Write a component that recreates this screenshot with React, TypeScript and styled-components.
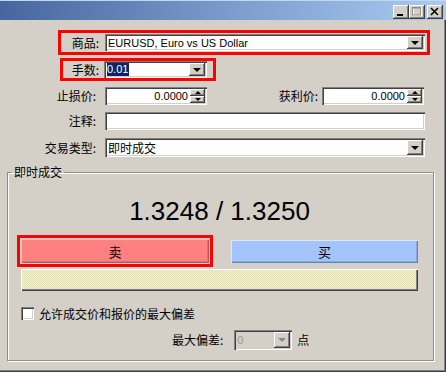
import * as React from 'react';
import styled, { createGlobalStyle } from 'styled-components';

const GlobalStyle = createGlobalStyle`
  html, body {
    margin: 0;
    padding: 0;
    background: #d4d0c8;
  }
  body {
    font-family: "Liberation Sans", "Noto Sans CJK SC", sans-serif;
  }
`;

const raised = `
  box-shadow: inset -1px -1px #404040, inset 1px 1px #fff, inset -2px -2px #808080;
`;

const sunken = `
  box-shadow: inset 1px 1px #808080, inset 2px 2px #404040, inset -1px -1px #fff, inset -2px -2px #d4d0c8;
`;

const Window = styled.div`
  width: 446px;
  height: 372px;
  background: #d4d0c8;
  display: flex;
  flex-direction: column;
  overflow: hidden;
  box-shadow: inset -1px -1px #404040, inset -2px -2px #808080;
`;

const TitleBar = styled.div`
  height: 20px;
  flex: none;
  display: flex;
  justify-content: flex-end;
  align-items: center;
  padding-right: 3px;
  padding-top: 2px;
  box-sizing: border-box;
  background: linear-gradient(to right, #46669f, #7a9acb 50%, #a8cbf1);
  border-top: 1px solid #c4d6ee;
`;

const CaptionButton = styled.div<{ $gap?: number }>`
  width: 16px;
  height: 14px;
  margin-left: ${p => p.$gap || 0}px;
  background: #d4d0c8;
  display: flex;
  align-items: center;
  justify-content: center;
  ${raised}
`;

const Form = styled.div`
  padding-right: 21px;
  display: flex;
  flex-direction: column;
`;

const Highlight = styled.div<{ $ml: number; $w: number; $mt: number; $pad: string }>`
  box-sizing: border-box;
  margin-left: ${p => p.$ml}px;
  margin-top: ${p => p.$mt}px;
  width: ${p => p.$w}px;
  border: 3px solid #ff0000;
  padding: ${p => p.$pad};
  display: flex;
  align-items: center;
  flex: none;
`;

const Row = styled.div<{ $mt: number }>`
  display: flex;
  align-items: center;
  margin-top: ${p => p.$mt}px;
`;

const Label = styled.div<{ $w?: number; $pr: number }>`
  ${p => (p.$w ? `width: ${p.$w}px; flex: none;` : 'flex: 1;')}
  box-sizing: border-box;
  padding-right: ${p => p.$pr}px;
  text-align: right;
  font-family: "Noto Sans CJK SC", sans-serif;
  font-size: 12px;
  line-height: 16px;
  color: #000;
  white-space: nowrap;
`;

const Field = styled.div<{ $w?: number; $h: number; $disabled?: boolean }>`
  ${p => (p.$w ? `width: ${p.$w}px; flex: none;` : 'flex: 1;')}
  height: ${p => p.$h}px;
  box-sizing: border-box;
  padding: 2px;
  display: flex;
  align-items: stretch;
  background: ${p => (p.$disabled ? '#d4d0c8' : '#fff')};
  ${sunken}
`;

const FieldText = styled.div<{ $right?: boolean; $cjk?: boolean; $muted?: boolean }>`
  flex: 1;
  display: flex;
  align-items: center;
  justify-content: ${p => (p.$right ? 'flex-end' : 'flex-start')};
  padding: 0 2px 0 1px;
  font-family: ${p => (p.$cjk ? '"Noto Sans CJK SC", sans-serif' : '"Liberation Sans", sans-serif')};
  font-size: ${p => (p.$cjk ? 12 : 11)}px;
  color: ${p => (p.$muted ? '#9a9892' : '#000')};
  white-space: nowrap;
  overflow: hidden;
`;

const Selected = styled.span`
  background: #0a246a;
  color: #fff;
  padding-right: 1px;
  line-height: 13px;
`;

const DropButton = styled.div`
  width: 16px;
  flex: none;
  background: #d4d0c8;
  display: flex;
  align-items: center;
  justify-content: center;
  ${raised}
`;

const Arrow = styled.div<{ $up?: boolean; $size: number; $color?: string }>`
  width: 0;
  height: 0;
  border-left: ${p => p.$size}px solid transparent;
  border-right: ${p => p.$size}px solid transparent;
  ${p => (p.$up ? 'border-bottom' : 'border-top')}: ${p => p.$size}px solid ${p => p.$color || '#000'};
`;

const SpinColumn = styled.div`
  width: 15px;
  flex: none;
  display: flex;
  flex-direction: column;
`;

const SpinHalf = styled.div`
  flex: 1;
  background: #d4d0c8;
  display: flex;
  align-items: center;
  justify-content: center;
  ${raised}
`;

const GroupBox = styled.fieldset`
  margin: 8px 12px 0 7px;
  padding: 0 15px 10px 13px;
  min-width: 0;
  border: 1px solid #8e8c86;
  box-shadow: 1px 1px 0 #fff, inset 1px 1px 0 #fff;
  display: flex;
  flex-direction: column;
`;

const Legend = styled.legend`
  margin-left: -9px;
  padding: 0 2px;
  font-family: "Noto Sans CJK SC", sans-serif;
  font-size: 12px;
  line-height: 14px;
  color: #000;
`;

const Price = styled.div`
  margin-top: 17px;
  text-align: center;
  font-family: "Liberation Sans", sans-serif;
  font-size: 26px;
  line-height: 30px;
  color: #000;
`;

const TradeRow = styled.div`
  margin-top: 9px;
  display: flex;
  justify-content: space-between;
  align-items: center;
`;

const TradeButton = styled.div<{ $tone: 'sell' | 'buy'; $w: number; $h: number }>`
  width: ${p => p.$w}px;
  height: ${p => p.$h}px;
  display: flex;
  align-items: center;
  justify-content: center;
  font-family: "Noto Sans CJK SC", sans-serif;
  font-size: 13px;
  color: #000;
  background: ${p => (p.$tone === 'sell' ? '#ff8080' : '#a2c3fb')};
  box-shadow: ${p =>
    p.$tone === 'sell'
      ? 'inset 1px 1px #ffb6b6, inset -1px -1px #b85858, inset -2px -2px #e07070'
      : 'inset 1px 1px #d8e8ff, inset -1px -1px #6284c4, inset -2px -2px #8aa8e0'};
`;

const QuoteBar = styled.div`
  margin-top: 2px;
  height: 22px;
  background: repeating-conic-gradient(#fcf8c4 0 25%, #dcd8bc 0 50%) 0 0 / 2px 2px;
  box-shadow: inset 1px 1px #fff, inset -1px -1px #404040, inset -2px -2px #808080;
`;

const CheckRow = styled.div`
  margin-top: 16px;
  height: 13px;
  display: flex;
  align-items: center;
  gap: 5px;
`;

const CheckBox = styled.div`
  width: 13px;
  height: 13px;
  flex: none;
  background: #fff;
  ${sunken}
`;

const Text = styled.span`
  font-family: "Noto Sans CJK SC", sans-serif;
  font-size: 12px;
  line-height: 16px;
  color: #000;
  white-space: nowrap;
`;

const DeviationRow = styled.div`
  margin-top: 10px;
  height: 20px;
  padding-left: 151px;
  display: flex;
  align-items: center;
  gap: 11px;
`;

const Unit = styled(Text)`
  margin-left: -6px;
`;

function Combo(props: { w?: number; h: number; children: React.ReactNode; cjk?: boolean; disabled?: boolean }) {
  return (
    <Field $w={props.w} $h={props.h} $disabled={props.disabled}>
      <FieldText $cjk={props.cjk} $muted={props.disabled}>{props.children}</FieldText>
      <DropButton>
        <Arrow $size={4} $color={props.disabled ? '#8a8882' : '#000'} />
      </DropButton>
    </Field>
  );
}

function Spin(props: { value: string }) {
  return (
    <Field $w={102} $h={18}>
      <FieldText $right>{props.value}</FieldText>
      <SpinColumn>
        <SpinHalf><Arrow $up $size={3} /></SpinHalf>
        <SpinHalf><Arrow $size={3} /></SpinHalf>
      </SpinColumn>
    </Field>
  );
}

export default function App() {
  return (
    <Window>
      <GlobalStyle />
      <TitleBar>
        <CaptionButton>
          <svg width="10" height="10" viewBox="0 0 10 10">
            <rect x="1" y="7" width="6" height="2" fill="#000" />
          </svg>
        </CaptionButton>
        <CaptionButton>
          <svg width="10" height="10" viewBox="0 0 10 10">
            <rect x="1.5" y="0.5" width="8" height="8" fill="none" stroke="#fff" />
            <rect x="0.5" y="0" width="8" height="8" fill="none" stroke="#8e8c86" />
            <rect x="0.5" y="0" width="8" height="1.5" fill="#8e8c86" />
          </svg>
        </CaptionButton>
        <CaptionButton $gap={2}>
          <svg width="10" height="9" viewBox="0 0 10 9">
            <path d="M1 1 L8 8 M8 1 L1 8" stroke="#000" strokeWidth="1.6" />
          </svg>
        </CaptionButton>
      </TitleBar>

      <Form>
        <Highlight $ml={58} $w={372} $mt={10} $pad="1px 2px 1px 0">
          <Label $w={44} $pr={6}>商品:</Label>
          <Combo h={17}>EURUSD, Euro vs US Dollar</Combo>
        </Highlight>

        <Highlight $ml={60} $w={156} $mt={3} $pad="0 6px 0 0">
          <Label $w={41} $pr={5}>手数:</Label>
          <Combo w={103} h={17}><Selected>0.01</Selected></Combo>
        </Highlight>

        <Row $mt={6}>
          <Label $w={105} $pr={9}>止损价:</Label>
          <Spin value="0.0000" />
          <Label $pr={4}>获利价:</Label>
          <Spin value="0.0000" />
          <div style={{ width: 1 }} />
        </Row>

        <Row $mt={7}>
          <Label $w={105} $pr={9}>注释:</Label>
          <Field $h={18}>
            <FieldText />
          </Field>
        </Row>

        <Row $mt={8}>
          <Label $w={105} $pr={9}>交易类型:</Label>
          <Combo h={19} cjk>即时成交</Combo>
        </Row>
      </Form>

      <GroupBox>
        <Legend>即时成交</Legend>
        <Price>1.3248 / 1.3250</Price>
        <TradeRow>
          <Highlight $ml={-4} $w={196} $mt={0} $pad="1px">
            <TradeButton $tone="sell" $w={188} $h={24}>卖</TradeButton>
          </Highlight>
          <TradeButton $tone="buy" $w={187} $h={23}>买</TradeButton>
        </TradeRow>
        <QuoteBar />
        <CheckRow>
          <CheckBox />
          <Text>允许成交价和报价的最大偏差</Text>
        </CheckRow>
        <DeviationRow>
          <Text>最大偏差:</Text>
          <Combo w={58} h={20} disabled>0</Combo>
          <Unit>点</Unit>
        </DeviationRow>
      </GroupBox>
    </Window>
  );
}
